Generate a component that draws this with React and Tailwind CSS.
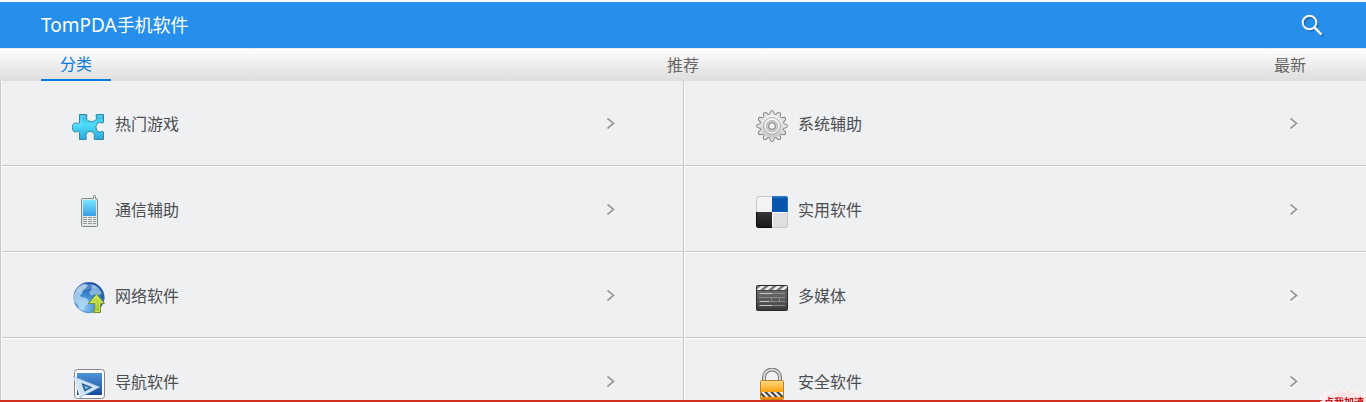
import React from "react";

function PuzzleIcon() {
  return (
    <svg viewBox="0 0 32 32" className="size-8 overflow-visible" aria-hidden="true">
      <defs>
        <linearGradient id="puzzle" x1="0" y1="0" x2="0" y2="1">
          <stop offset="0" stopColor="#35b7dc" />
          <stop offset=".4" stopColor="#4fdcfa" />
          <stop offset="1" stopColor="#2aa9d8" />
        </linearGradient>
      </defs>
      <path
        d="M6.500 4.500H13.500C14.500 5 13.500 7 13.500 8C13.500 10 15.500 11.500 18.500 11.500S23.500 10 23.500 8C23.500 7 22.500 5.500 23.500 4.500H30.500V12.500C29.500 13.500 28 12.500 26.500 12.500C24.500 12.500 23 14.500 23 17.200S24.500 22 26.500 22C28 22 29.500 21 30.500 22V29.500H21.500C20.500 28.500 21.500 27.500 21.500 25.500C21.500 23 19.500 21.500 17.200 21.500S13 23 13 25.500C13 27.500 14 28.500 13 29.500H6.500V22C5.500 20.500 4.500 22 2.500 22C.5 22-.6 20-.6 17.500S.5 13 2.500 13C4.500 13 5.500 14.500 6.500 13Z"
        fill="url(#puzzle)" stroke="#3387a3" strokeWidth="1" strokeLinejoin="round"
      />
      <path d="M8 6h4M25 6h4M8 6v8M1 16c0-1.500 2-2 4-1" fill="none" stroke="#a2f3ff" opacity=".5" />
    </svg>
  );
}

function GearIcon() {
  return (
    <svg viewBox="0 0 32 32" className="size-8 overflow-visible" aria-hidden="true">
      <defs>
        <linearGradient id="gear" x1="0" y1="0" x2="0" y2="1">
          <stop offset="0" stopColor="#f4f4f4" />
          <stop offset="1" stopColor="#c8c8c8" />
        </linearGradient>
      </defs>
      <g fill="#e2e2e2" stroke="#7c7c7c" strokeWidth=".9">
        {[0, 30, 60, 90, 120, 150, 180, 210, 240, 270, 300, 330].map((a) => (
          <path key={a} d="M13.300 5L14.500 1.200Q16-.2 17.500 1.200L18.700 5" transform={`rotate(${a} 16 16)`} />
        ))}
      </g>
      <circle cx="16" cy="16" r="11.600" fill="url(#gear)" />
      <circle cx="16" cy="16" r="8.500" fill="none" stroke="#aaa" strokeWidth=".8" />
      <circle cx="16" cy="16" r="6.800" fill="none" stroke="#fafafa" />
      <circle cx="16" cy="16" r="5.500" fill="#d2d2d2" stroke="#aaa" strokeWidth=".8" />
      <circle cx="16" cy="16" r="3.300" fill="#eff0f2" stroke="#858585" strokeWidth="1.100" />
    </svg>
  );
}

function PhoneIcon() {
  return (
    <svg viewBox="0 0 32 32" className="size-8 overflow-visible" aria-hidden="true">
      <defs>
        <linearGradient id="screen" x1="0" y1="0" x2="0" y2="1">
          <stop offset="0" stopColor="#7be6ff" />
          <stop offset="1" stopColor="#379de8" />
        </linearGradient>
      </defs>
      <path d="M8.500 3.500Q8.500 2.500 9.500 2.500H20.500V.2Q20.500-.5 21.500-.5T22.500.2V2.500Q24.500 2.500 24.500 4V29.500Q24.500 30.500 23.500 30.500H9.500Q8.500 30.500 8.500 29.500Z" fill="#e1e5e5" stroke="#7d8b8b" />
      <path d="M10 4h13v16H10z" fill="url(#screen)" />
      <path d="M10 21h13v8H10z" fill="#e9ebeb" />
      <g fill="#929b9c">
        <path d="M10 21h4v1h-4zM15 21h4v1h-4zM20 21h3v1h-3zM10 23h4v1h-4zM15 23h4v1h-4zM20 23h3v1h-3zM10 25h4v1h-4zM15 25h4v1h-4zM20 25h3v1h-3zM10 27h4v1h-4zM15 27h4v1h-4zM20 27h3v1h-3z" />
      </g>
    </svg>
  );
}

function SquaresIcon() {
  return (
    <svg viewBox="0 0 32 32" className="size-8" aria-hidden="true">
      <defs>
        <clipPath id="tile"><rect width="32" height="32" rx="3" /></clipPath>
        <linearGradient id="blueTile" x1="0" y1="0" x2="0" y2="1">
          <stop offset="0" stopColor="#0a54ad" /><stop offset="1" stopColor="#0756ad" />
        </linearGradient>
        <linearGradient id="blackTile" x1="0" y1="0" x2="0" y2="1">
          <stop offset="0" stopColor="#363636" /><stop offset="1" stopColor="#171717" />
        </linearGradient>
      </defs>
      <g clipPath="url(#tile)">
        <path d="M0 0h16v16H0z" fill="#f3f3f3" />
        <path d="M16 0h16v16H16z" fill="url(#blueTile)" />
        <path d="M0 16h16v16H0z" fill="url(#blackTile)" />
        <path d="M16 16h16v16H16z" fill="#dfdfdf" />
        <path d="M16 1h16" stroke="#3987d1" />
        <path d="M16.500 16v16M16 16.500h16" stroke="#fafafa" />
      </g>
      <path d="M.5 16V3Q.5.5 3 .5H16M16 31.500h13q2.500 0 2.500-2.500V16" fill="none" stroke="#c6c6c6" />
      <path d="M31.500 16V3Q31.500.5 29 .5H16" fill="none" stroke="#2876c4" />
      <path d="M.5 16v13q0 2.500 2.500 2.500h13" fill="none" stroke="#0c0c0c" />
    </svg>
  );
}

function GlobeIcon() {
  return (
    <svg viewBox="0 0 32 32" className="size-8" aria-hidden="true">
      <defs>
        <radialGradient id="globe" cx=".35" cy=".85" r=".9">
          <stop offset="0" stopColor="#8ac6ee" />
          <stop offset=".5" stopColor="#3c85cd" />
          <stop offset="1" stopColor="#1a4ea2" />
        </radialGradient>
        <linearGradient id="arrow" x1="0" y1="0" x2="0" y2="1">
          <stop offset="0" stopColor="#d4e84c" /><stop offset="1" stopColor="#96bd20" />
        </linearGradient>
      </defs>
      <circle cx="16" cy="15.500" r="15.300" fill="url(#globe)" stroke="#2f6cb4" strokeWidth=".6" />
      <path d="M2 10Q5 4 11 2l4 1-2 3-3 2-1 4-2 1 1 2 5 1 3 3-2 4-3 2-1 4-4-2-1-4-4-3-1-5z" fill="#c5e2f6" opacity=".7" />
      <path d="M18 2.500l4 1 4 3 3 5-4 2-4-1-3 1-2-3 2-2 1-3z" fill="#c5e0f5" opacity=".6" />
      <path d="M5 5Q15-2 26 6Q15 5 3 12Z" fill="#fff" opacity=".2" />
      <path d="M23.500 12L31.500 21.500H27.500V30.500H20.500V27.500H22V21.500H15.500Z" fill="url(#arrow)" stroke="#6d9428" strokeLinejoin="round" />
      <path d="M23.500 13.600L17.600 20.500H23V29.500H26.500V20.500H29.500Z" fill="none" stroke="#e5f28a" strokeWidth=".8" opacity=".8" />
    </svg>
  );
}

function ClapperIcon() {
  return (
    <svg viewBox="0 0 32 32" className="size-8" aria-hidden="true">
      <defs>
        <linearGradient id="slate" x1="0" y1="0" x2="0" y2="1">
          <stop offset="0" stopColor="#777" /><stop offset=".8" stopColor="#4c4c4c" /><stop offset="1" stopColor="#363636" />
        </linearGradient>
        <clipPath id="clap"><path d="M1 4h30v4H1z" /></clipPath>
      </defs>
      <rect x=".5" y="3.500" width="31" height="25" rx="1" fill="url(#slate)" stroke="#2f2929" />
      <g clipPath="url(#clap)">
        <path d="M0 4h32v4H0z" fill="#777" />
        <path d="M0 8l5-4h4L4 8zM8 8l5-4h4l-5 4zM16 8l5-4h4l-5 4zM24 8l5-4h4l-5 4z" fill="#f1f1f1" />
      </g>
      <path d="M1 8.500h30" stroke="#444" />
      <path d="M3 11.500h26M3 15.500h26M3 19.500h26M3 23.500h26M15.500 16v3M23.500 16v3" stroke="#8a8a8a" />
      <path d="M4 11.500h12M4 19.500h9M4 23.500h12" stroke="#c9c9c9" />
    </svg>
  );
}

function CompassIcon() {
  return (
    <svg viewBox="0 0 32 32" className="size-8 overflow-visible" aria-hidden="true">
      <defs>
        <linearGradient id="nav" x1="0" y1="0" x2="0" y2="1">
          <stop offset="0" stopColor="#4d95d8" /><stop offset="1" stopColor="#194d98" />
        </linearGradient>
      </defs>
      <rect x="1.500" y="1.500" width="30" height="29" rx="3" fill="#fafafa" stroke="#878787" />
      <path d="M4 5h27v22H4z" fill="url(#nav)" />
      <path d="M30 4v24" stroke="#fafafa" strokeWidth="2" />
      <path d="M.5 8.500L27 19 7 29.500Z" fill="#cfe3f2" stroke="#77a8cc" strokeWidth=".6" />
      <path d="M8.500 15l11 4.300-8 4.500z" fill="#285f99" />
      <path d="M11 17.500l5 2-3.500 2z" fill="#86b4dc" />
      <path d="M1.500 9.500l5.500 18.500" stroke="#f8fdff" />
    </svg>
  );
}

function LockIcon() {
  return (
    <svg viewBox="0 0 32 32" className="size-8" aria-hidden="true">
      <defs>
        <linearGradient id="lock" x1="0" y1="0" x2="0" y2="1">
          <stop offset="0" stopColor="#ffdc82" /><stop offset=".55" stopColor="#faa51a" /><stop offset="1" stopColor="#ec8a06" />
        </linearGradient>
        <clipPath id="tape"><path d="M5 24h22v5H5z" /></clipPath>
      </defs>
      <path d="M8 13V9.500a8 8 0 0 1 16 0V13" fill="none" stroke="#777" strokeWidth="4" />
      <path d="M8 13V9.500a8 8 0 0 1 16 0V13" fill="none" stroke="#d2d2d2" strokeWidth="2.200" />
      <rect x="4.500" y="12.500" width="23" height="19" rx="1" fill="url(#lock)" stroke="#c28125" />
      <g clipPath="url(#tape)">
        <path d="M5 24h22v5H5z" fill="#f4f0e6" />
        <path d="M2 24l5 5h3l-5-5zM8 24l5 5h3l-5-5zM14 24l5 5h3l-5-5zM20 24l5 5h3l-5-5z" fill="#464646" />
      </g>
    </svg>
  );
}

const categories = [
  ["热门游戏", PuzzleIcon],
  ["系统辅助", GearIcon],
  ["通信辅助", PhoneIcon],
  ["实用软件", SquaresIcon],
  ["网络软件", GlobeIcon],
  ["多媒体", ClapperIcon],
  ["导航软件", CompassIcon],
  ["安全软件", LockIcon],
];

const tabs = ["分类", "推荐", "最新"];

export default function App() {
  return (
    <div className="h-screen overflow-hidden bg-[#eff0f2] font-['Noto_Sans','Noto_Sans_CJK_SC',sans-serif] text-base text-[#4c4e50]">
      <header className="flex h-12 items-center justify-between border-t-2 border-white bg-[#268eeb] px-[41px]">
        <h1 className="text-lg leading-6 text-white">
          <span className="text-[19px]">TomPDA</span>手机软件
        </h1>
        <button type="button" aria-label="搜索" className="flex size-6 items-center justify-center">
          <svg viewBox="0 0 24 24" className="size-6" fill="none" aria-hidden="true">
            <g stroke="#1a5a94" opacity=".6" transform="translate(1 2)">
              <circle cx="9" cy="9" r="6.500" strokeWidth="2" />
              <path d="M14 14l6 6" strokeWidth="3" strokeLinecap="round" />
            </g>
            <circle cx="8.500" cy="9.500" r="6.800" stroke="#f5f5f0" strokeWidth="2" />
            <path d="M13.500 14.500l6.300 6.300" stroke="#f5f5f0" strokeWidth="2.600" strokeLinecap="round" />
          </svg>
        </button>
      </header>
      <nav className="flex justify-between border-t border-[#e8edf2] bg-linear-to-b from-[#fdfdfd] to-[#dedede] px-[41px]">
        {tabs.map((tab, i) => (
          <a
            key={tab}
            href="#"
            aria-current={i === 0 ? "page" : undefined}
            className={
              i === 0
                ? "h-8 w-[70px] border-b-2 border-[#0a7bdc] text-center leading-[30px] text-[#0a7bdc]"
                : "h-8 w-[70px] text-center leading-8 text-[#666]"
            }
          >
            {tab}
          </a>
        ))}
      </nav>
      <main className="grid grid-cols-2">
        {categories.map(([label, Icon]) => (
          <a key={label} href="#" className="block border-l border-[#c6c7c9]">
            <span className="block border-l border-b border-white">
              <span className="flex h-[85px] items-center border-b border-[#c6c7c9] pr-[67px] pl-[71px]">
                <span className="mt-1.5 shrink-0"><Icon /></span>
                <span className="ml-2.5 grow pt-0.5 leading-6">{label}</span>
                <svg viewBox="0 0 10 14" className="h-3.5 w-2.5" fill="none" aria-hidden="true">
                  <path d="M1.500 4l6 5-6 5" stroke="#fff" strokeWidth="1.500" />
                  <path d="M1.500 2.500l6 5-6 5" stroke="#999" strokeWidth="1.700" />
                </svg>
              </span>
            </span>
          </a>
        ))}
      </main>
      <div className="fixed inset-x-0 bottom-0 h-0.5 bg-[#d3301f]" />
      <a href="#" className="fixed right-0 bottom-0 h-3.5 w-[46px] overflow-hidden text-[10px] leading-[14px] font-bold text-[#c9141c]">
        <svg viewBox="0 0 46 14" className="absolute inset-0 h-3.5 w-[46px]" aria-hidden="true">
          <path d="M0 14l4-2-5-3 7 0-1-4 6 1 2-4 4 3 4-5 3 4 4-4 4 4 4-3 1 4 5-2-1 4 5 0v7z" fill="#fae6e6" stroke="#fff" strokeWidth=".7" />
        </svg>
        <span className="relative block pt-[7px] pl-1 whitespace-nowrap">点我加速</span>
      </a>
    </div>
  );
}
